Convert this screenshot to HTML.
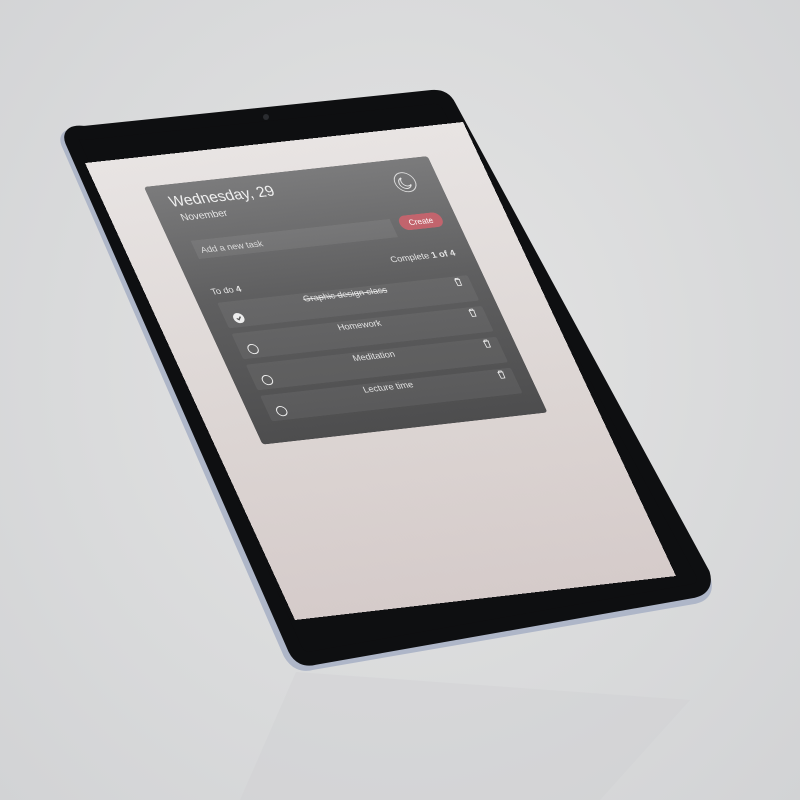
<!DOCTYPE html>
<html><head><meta charset="utf-8"><style>
html,body{margin:0;padding:0}
body{width:800px;height:800px;position:relative;overflow:hidden;background:radial-gradient(ellipse at 50% 45%,#e4e4e4 0%,#d9dadb 60%,#d2d3d5 100%);font-family:"Liberation Sans",sans-serif}
svg.bg{position:absolute;left:0;top:0}
#scr{position:absolute;left:0;top:0;width:400px;height:500px;transform-origin:0 0;
transform:matrix3d(0.951418,-0.10081,0,0.00001386,0.413526,0.900392,0,-0.000021948,0,0,1,0,85,163,0,1);
background:linear-gradient(180deg,#e8e4e3 0%,#dcd5d3 60%,#d5cbca 100%)}
#panel{position:absolute;left:48px;top:32px;width:300px;height:283px;background:linear-gradient(180deg,#7b7b7c 0%,#5f5f60 45%,#4d4d4e 100%);border-radius:3px;color:#e6e6e6}
.a{position:absolute;white-space:nowrap}
.row{position:absolute;left:20px;width:264px;height:28px;background:rgba(255,255,255,.06);border-radius:2px}
.row .t{position:absolute;left:0;right:0;top:1px;text-align:center;font-size:9.5px;color:#e4e4e4}
.row .c{position:absolute;left:9px;top:13px;width:9px;height:9px;border:1px solid #eee;border-radius:50%}
.row .d{position:absolute;right:8px;top:1px}
</style></head><body>
<svg class="bg" width="800" height="800">
<path d="M296 672 L690 700 L600 800 L240 800 Z" fill="#cdced2" opacity="0.35"/>
<path d="M82 137 L430 101 Q442 99 448 111 L704 580 Q708 594 694 597 L312 663 Q298 667 290 653 L68 143 Q64 133 82 137 Z" fill="#aeb6c8" stroke="#aeb6c8" stroke-width="14" stroke-linejoin="round"/>
<path d="M84 133 L432 97 Q444 96 449 106 L703 574 Q707 588 693 591 L314 658 Q301 661 295 649 L72 141 Q68 131 84 133 Z" fill="#0e0f11" stroke="#0e0f11" stroke-width="14" stroke-linejoin="round"/>
<circle cx="266" cy="117" r="3" fill="#2a2c30"/>
</svg>
<div id="scr">
 <div id="panel">
  <div class="a" style="left:19px;top:11px;font-size:16px;color:#f0f0f0">Wednesday, 29</div>
  <div class="a" style="left:23px;top:31px;font-size:10.5px">November</div>
  <div class="a" style="left:254px;top:14px;width:20px;height:20px;border:1px solid #ddd;border-radius:50%">
   <svg width="20" height="20" viewBox="0 0 20 20"><path d="M8 5 A6 6 0 1 0 15 13 A5 5 0 0 1 8 5 Z" fill="none" stroke="#e6e6e6" stroke-width="1"/></svg>
  </div>
  <div class="a" style="left:22px;top:62px;width:210px;height:20px;background:rgba(255,255,255,.07)"><span style="position:absolute;left:6px;top:6px;font-size:9.5px;color:#ddd">Add a new task</span></div>
  <div class="a" style="left:240px;top:60px;width:45px;height:16px;border-radius:8px;background:#c2646d;color:#fff;font-size:8.5px;text-align:center;line-height:16px">Create</div>
  <div class="a" style="right:18px;top:100px;font-size:9.5px">Complete <b>1 of 4</b></div>
  <div class="a" style="left:19px;top:113px;font-size:9.5px">To do <b>4</b></div>
  <div class="row" style="top:130px"><div class="t" style="text-decoration:line-through">Graphic design class</div><div class="c" style="background:#eee"><svg width="9" height="9" viewBox="0 0 9 9" style="position:absolute;left:0;top:0"><path d="M2.3 4.6 L4 6.2 L6.8 3" fill="none" stroke="#555" stroke-width="1.3"/></svg></div><svg class="d" width="9" height="10" viewBox="0 0 9 10"><path d="M1.5 2.5 H7.5 M3 2.5 V1.2 H6 V2.5 M2.2 2.5 L2.6 9 H6.4 L6.8 2.5" fill="none" stroke="#eee" stroke-width="0.9"/></svg></div>
  <div class="row" style="top:164px"><div class="t">Homework</div><div class="c"></div><svg class="d" width="9" height="10" viewBox="0 0 9 10"><path d="M1.5 2.5 H7.5 M3 2.5 V1.2 H6 V2.5 M2.2 2.5 L2.6 9 H6.4 L6.8 2.5" fill="none" stroke="#eee" stroke-width="0.9"/></svg></div>
  <div class="row" style="top:198px"><div class="t">Meditation</div><div class="c"></div><svg class="d" width="9" height="10" viewBox="0 0 9 10"><path d="M1.5 2.5 H7.5 M3 2.5 V1.2 H6 V2.5 M2.2 2.5 L2.6 9 H6.4 L6.8 2.5" fill="none" stroke="#eee" stroke-width="0.9"/></svg></div>
  <div class="row" style="top:232px"><div class="t">Lecture time</div><div class="c"></div><svg class="d" width="9" height="10" viewBox="0 0 9 10"><path d="M1.5 2.5 H7.5 M3 2.5 V1.2 H6 V2.5 M2.2 2.5 L2.6 9 H6.4 L6.8 2.5" fill="none" stroke="#eee" stroke-width="0.9"/></svg></div>
 </div>
</div>
</body></html>
